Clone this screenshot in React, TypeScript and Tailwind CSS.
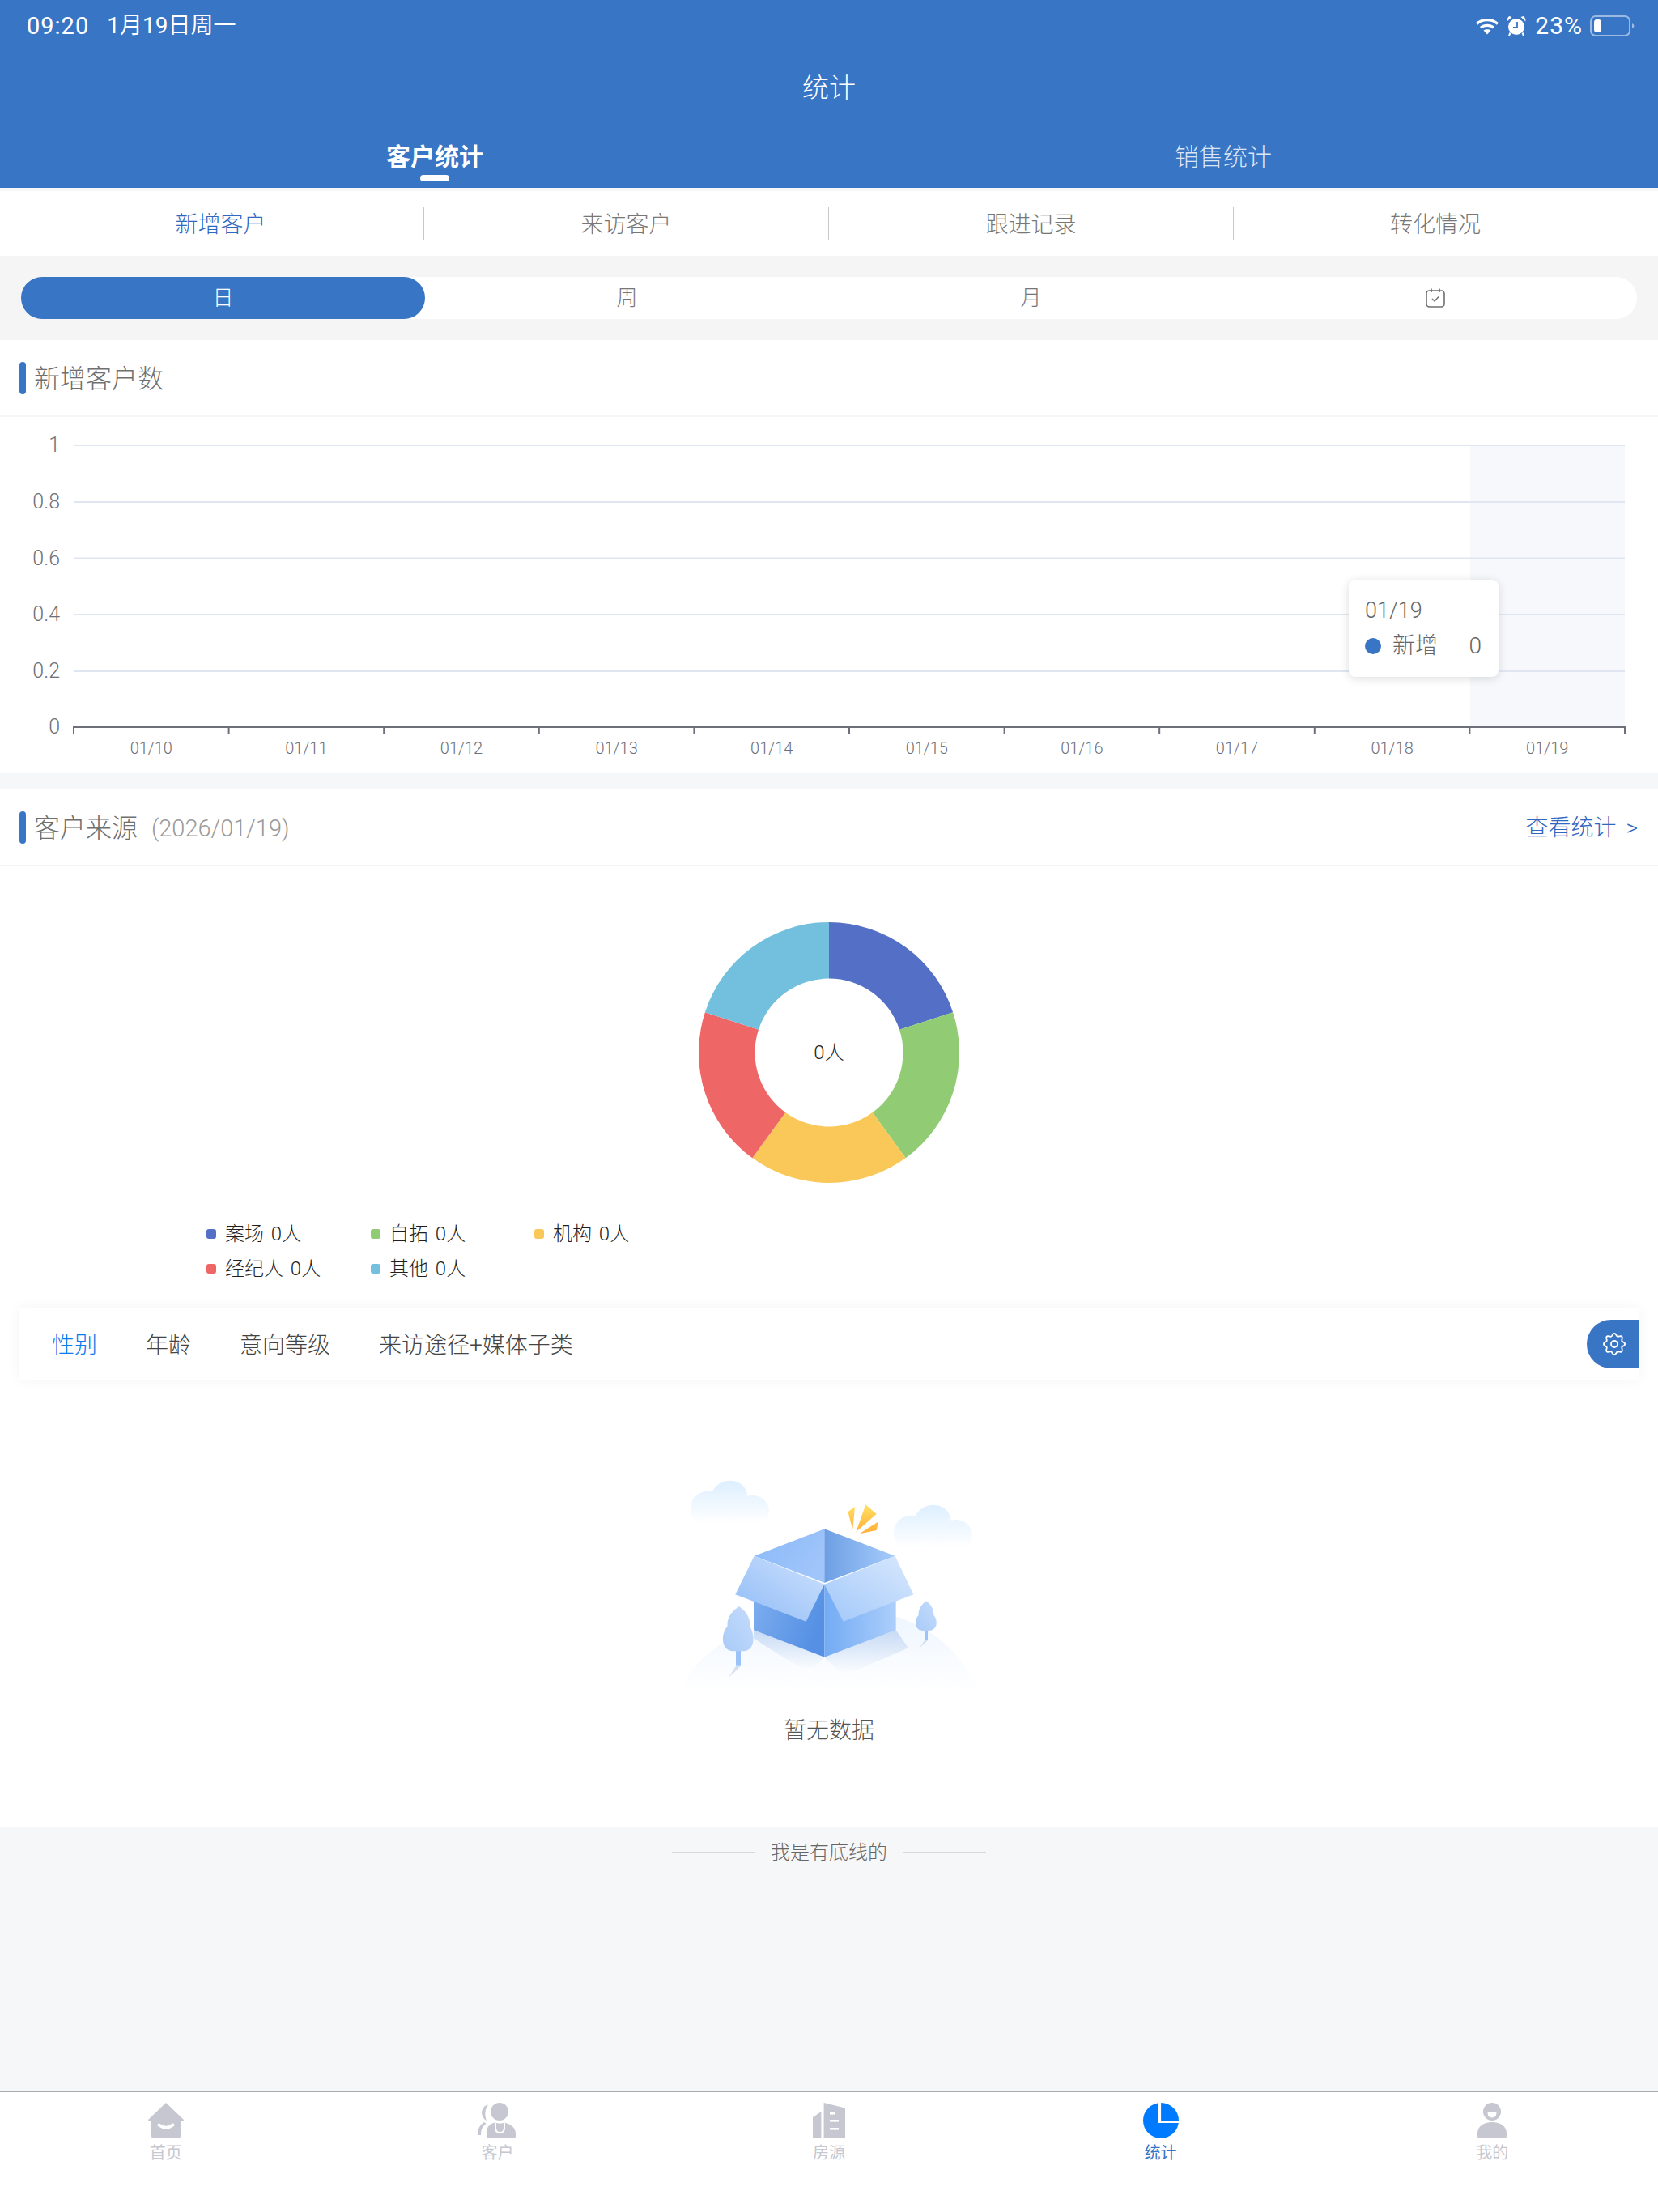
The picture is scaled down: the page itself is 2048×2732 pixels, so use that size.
import React from "react";

const F = "font-['Roboto','Noto_Sans_CJK_SC',sans-serif]";

function arc(cx: number, cy: number, R: number, r: number, a0: number, a1: number) {
  const p = (rad: number, a: number) => {
    const t = ((a - 90) * Math.PI) / 180;
    return `${(cx + rad * Math.cos(t)).toFixed(2)} ${(cy + rad * Math.sin(t)).toFixed(2)}`;
  };
  return `M${p(R, a0)} A${R} ${R} 0 0 1 ${p(R, a1)} L${p(r, a1)} A${r} ${r} 0 0 0 ${p(r, a0)} Z`;
}

function gearPath() {
  const pts: string[] = [];
  for (let i = 0; i < 144; i++) {
    const t = (i / 144) * Math.PI * 2;
    const r = 11.6 + 1.5 * Math.cos(8 * t);
    pts.push(`${(14 + r * Math.cos(t)).toFixed(2)},${(14 + r * Math.sin(t)).toFixed(2)}`);
  }
  return pts.join(" ");
}

function Wifi() {
  return (
    <svg width="30" height="22" viewBox="0 0 30 22" fill="none" stroke="white" strokeWidth="3.4">
      <path d="M2 8.5 C9 2 21 2 28 8.5" />
      <path d="M7 13.2 C11.5 9.4 18.5 9.4 23 13.2" />
      <path d="M15 21.5 L10.5 16.5 C13 14.8 17 14.8 19.5 16.5 Z" fill="white" stroke="none" />
    </svg>
  );
}

function Alarm() {
  return (
    <svg width="24" height="26" viewBox="0 0 24 25">
      <circle cx="12" cy="13.5" r="10" fill="white" />
      <path d="M.5 7 L6.5 1.5 L3.2 .6 Q.5 2.5 .5 7Z M23.5 7 L17.5 1.5 L20.8 .6 Q23.5 2.5 23.5 7Z" fill="white" />
      <path d="M4.5 21 L3 24.5 M19.5 21 L21 24.5" stroke="white" strokeWidth="2" />
      <path d="M13 7.5 V14.5 H8" stroke="#3875C5" strokeWidth="1.8" fill="none" />
    </svg>
  );
}

function Battery() {
  return (
    <svg width="55" height="26" viewBox="0 0 55 26">
      <rect x="1" y="1" width="48" height="24" rx="6" fill="none" stroke="white" strokeOpacity="0.5" strokeWidth="2" />
      <rect x="5" y="5" width="9" height="16" rx="3.5" fill="white" />
      <path d="M52 10 Q54.5 11 54.5 13 Q54.5 15 52 16Z" fill="white" fillOpacity="0.5" />
    </svg>
  );
}

function CalendarIcon() {
  return (
    <svg width="24" height="24" viewBox="0 0 24 24" fill="none" stroke="#6f6f6f" strokeWidth="1.6">
      <rect x="1" y="3" width="22" height="20" rx="3.5" />
      <path d="M7 0.5 V5 M17 0.5 V5" />
      <path d="M8 13 L11 16 L16 10.5" strokeWidth="1.4" />
    </svg>
  );
}

function HomeIcon() {
  return (
    <svg width="44" height="44" viewBox="0 0 44 44">
      <path d="M22 0 L43.4 20.6 Q45 23 42 23 H40 V41 Q40 44 37 44 H7 Q4 44 4 41 V23 H2 Q-1 23 .6 20.6 Z" fill="#C6C7D0" />
      <path d="M13.5 27.5 Q22 34 30.5 27.5" stroke="white" strokeWidth="4" strokeLinecap="round" fill="none" />
    </svg>
  );
}

function CustomerIcon() {
  return (
    <svg width="48" height="44" viewBox="0 0 48 44">
      <circle cx="27" cy="11" r="11" fill="#C6C7D0" />
      <path d="M11 41 V37 C11 30 15 26 21 24.5 C26 26 30 26 33 24.5 C39 26 47 30 47 38 V41 Q47 44 44 44 H14 Q11 44 11 41Z" fill="#C6C7D0" />
      <path d="M22 25 V31 Q22 37 27.5 37 Q33 37 33 31 V25" stroke="white" strokeWidth="2" fill="none" />
      <path d="M13 2.5 C4 4 2 17 11 22 C8.5 16 8.5 8 13 2.5Z" fill="#C6C7D0" />
      <path d="M8 24 C3 27 0 32 0 40 H4 C4 33 6 29 10.5 26 Z" fill="#C6C7D0" />
    </svg>
  );
}

function HouseIcon() {
  return (
    <svg width="44" height="44" viewBox="0 0 44 44">
      <path d="M2 18 L12.4 11 V44 H3 Q2 44 2 43Z" fill="#C6C7D0" />
      <path d="M15.6 0 L42 6.5 V43 Q42 44 41 44 H15.6Z" fill="#C6C7D0" />
      <rect x="23" y="12" width="6" height="2.6" fill="white" />
      <rect x="23" y="21" width="11" height="2.6" fill="white" />
      <rect x="23" y="31" width="11" height="2.6" fill="white" />
    </svg>
  );
}

function StatIcon() {
  return (
    <svg width="44" height="44" viewBox="0 0 44 44">
      <circle cx="22" cy="22" r="22" fill="#007AFF" />
      <path d="M20.5 0 V23.5 H44" stroke="white" strokeWidth="3.2" fill="none" />
    </svg>
  );
}

function MeIcon() {
  return (
    <svg width="44" height="44" viewBox="0 0 44 44">
      <circle cx="22" cy="11" r="11" fill="#C6C7D0" />
      <path d="M16.5 12 H27.5 Q27.5 18.5 22 18.5 Q16.5 18.5 16.5 12Z" fill="white" />
      <path d="M4 41 V38 C4 29 12 24 22 24 C32 24 40 29 40 38 V41 Q40 44 37 44 H7 Q4 44 4 41Z" fill="#C6C7D0" />
    </svg>
  );
}

function Chart() {
  const ys = [35, 105, 174.5, 244, 314];
  const yl = ["1", "0.8", "0.6", "0.4", "0.2"];
  const dates = ["01/10", "01/11", "01/12", "01/13", "01/14", "01/15", "01/16", "01/17", "01/18", "01/19"];
  const x0 = 91;
  const cw = 191.6;
  return (
    <svg width="2048" height="440" viewBox="0 0 2048 440" className="block">
      <rect x="1816" y="35" width="191" height="348" fill="#F6F8FC" />
      {ys.map((y) => (
        <line key={y} x1={x0} x2={2007} y1={y} y2={y} stroke="#E0E6F1" strokeWidth="2" />
      ))}
      {ys.map((y, i) => (
        <text key={y} x="74" y={y + 8} textAnchor="end" fontSize="25" fill="#6E7079" fontWeight="300">
          {yl[i]}
        </text>
      ))}
      <text x="74" y="391" textAnchor="end" fontSize="25" fill="#6E7079" fontWeight="300">
        0
      </text>
      <line x1={x0 - 1} x2={2008} y1="383" y2="383" stroke="#6E7079" strokeWidth="2" />
      {Array.from({ length: 11 }).map((_, i) => (
        <line key={i} x1={x0 + cw * i} x2={x0 + cw * i} y1="383" y2="392" stroke="#6E7079" strokeWidth="2" />
      ))}
      {dates.map((d, i) => (
        <text key={d} x={x0 + cw * (i + 0.5)} y="416" textAnchor="middle" fontSize="20" fill="#6E7079" fontWeight="300">
          {d}
        </text>
      ))}
    </svg>
  );
}

function Donut() {
  const colors = ["#5470C6", "#91CC75", "#FAC858", "#EE6666", "#73C0DE"];
  return (
    <svg width="322" height="322" viewBox="0 0 322 322" className="block mx-auto">
      {colors.map((c, i) => (
        <path key={c} d={arc(161, 161, 161, 91.5, i * 72, (i + 1) * 72)} fill={c} />
      ))}
      <text x="161" y="169" textAnchor="middle" fontSize="24" fill="#222222" fontWeight="300">
        0人
      </text>
    </svg>
  );
}

function Illustration() {
  const cloud = "M280 322 C272 275 310 238 360 246 C376 212 422 196 458 214 C480 226 488 244 491 263 C532 252 572 282 570 322 C568 345 555 360 540 366 H310 C295 360 282 345 280 322Z";
  return (
    <svg width="500" height="340" viewBox="0 0 1500 1020" className="block ml-[760px]">
      <defs>
        <linearGradient id="cl" x1="0" y1="0" x2="0" y2="1">
          <stop offset="0" stopColor="#DDEFFF" />
          <stop offset="1" stopColor="#FFFFFF" />
        </linearGradient>
        <linearGradient id="hill" x1="0" y1="0" x2="0" y2="1">
          <stop offset="0" stopColor="#EFF6FF" />
          <stop offset="1" stopColor="#FFFFFF" />
        </linearGradient>
        <linearGradient id="star" x1="0" y1="0" x2="0" y2="1">
          <stop offset="0" stopColor="#FFE066" />
          <stop offset="1" stopColor="#FFAE35" />
        </linearGradient>
        <linearGradient id="bl" x1="0" y1="0" x2="1" y2="0.6">
          <stop offset="0" stopColor="#8AB9F8" />
          <stop offset="1" stopColor="#A0C5FA" />
        </linearGradient>
        <linearGradient id="br" x1="0" y1="0.5" x2="1" y2="0.5">
          <stop offset="0" stopColor="#6E9FE4" />
          <stop offset="1" stopColor="#A6CCFC" />
        </linearGradient>
        <linearGradient id="fl" x1="0" y1="0" x2="1" y2="0.4">
          <stop offset="0" stopColor="#7FAFEF" />
          <stop offset="1" stopColor="#5590E4" />
        </linearGradient>
        <linearGradient id="fr" x1="0" y1="0" x2="1" y2="0">
          <stop offset="0" stopColor="#73ABF4" />
          <stop offset="1" stopColor="#ACCEFB" />
        </linearGradient>
        <linearGradient id="flapl" x1="0" y1="1" x2="1" y2="0">
          <stop offset="0" stopColor="#8FBBF7" />
          <stop offset="1" stopColor="#CFE2FD" />
        </linearGradient>
        <linearGradient id="flapr" x1="0" y1="1" x2="1" y2="0">
          <stop offset="0" stopColor="#A2C8FA" />
          <stop offset="1" stopColor="#D8E8FD" />
        </linearGradient>
        <linearGradient id="sh" x1="0" y1="0" x2="0" y2="1">
          <stop offset="0" stopColor="#C6DAF5" />
          <stop offset="1" stopColor="#FFFFFF" />
        </linearGradient>
        <linearGradient id="tree" x1="0" y1="1" x2="1" y2="0">
          <stop offset="0" stopColor="#A9CBF8" />
          <stop offset="1" stopColor="#C4DCFB" />
        </linearGradient>
      </defs>
      <path d="M235 985 C300 860 400 790 515 760 L775 860 L1040 710 C1160 745 1280 830 1345 985Z" fill="url(#hill)" />
      <path d={cloud} fill="url(#cl)" />
      <path d={cloud} fill="url(#cl)" transform="translate(753 90)" />
      <path d="M862 322 L888 303 L880 388Z M928 295 L968 330 L892 396Z M975 358 L968 390 L905 403Z" fill="url(#star)" />
      <path d="M513 760 L775 860 L720 916 Q600 850 513 790Z" fill="url(#sh)" />
      <path d="M1040 760 L1086 826 L845 930 L775 860Z" fill="url(#sh)" />
      <path d="M515 485 L775 385 V585Z" fill="url(#bl)" />
      <path d="M775 385 L1037 485 L775 585Z" fill="url(#br)" />
      <path d="M513 640 L775 590 V860 L513 760Z" fill="url(#fl)" />
      <path d="M775 590 L1040 640 V760 L775 860Z" fill="url(#fr)" />
      <path d="M515 485 L775 590 L707 728 L445 628Z" fill="url(#flapl)" />
      <path d="M1037 485 L1105 628 L845 728 L775 590Z" fill="url(#flapr)" />
      <path d="M447 893 L420 935 L465 893Z" fill="#D5E0EE" />
      <rect x="447" y="830" width="18" height="63" fill="#9CC3F7" />
      <path d="M458 672 C485 690 502 715 498 745 C515 770 525 838 470 838 H440 C390 838 390 775 416 745 C412 715 432 690 458 672Z" fill="url(#tree)" />
      <path d="M1146 798 L1128 826 L1158 798Z" fill="#D5E0EE" />
      <rect x="1146" y="755" width="12" height="43" fill="#9CC3F7" />
      <path d="M1152 652 C1170 665 1182 685 1180 705 C1195 720 1198 762 1160 762 H1142 C1106 762 1108 720 1124 705 C1122 685 1134 665 1152 652Z" fill="url(#tree)" />
    </svg>
  );
}

function Legend({ color, text }: { color: string; text: string }) {
  return (
    <div className="flex items-center h-[43px]">
      <span className={`w-[12px] h-[12px] rounded-[3px] ${color}`} />
      <span className="ml-[11px] text-[24px] text-[#1f1f1f] leading-none whitespace-pre [word-spacing:3px]">{text}</span>
    </div>
  );
}

function SectionTitle({ children }: { children: React.ReactNode }) {
  return (
    <div className="flex items-center">
      <span className="w-[8px] h-[40px] rounded-[4px] bg-[#3875C5]" />
      <span className="ml-[10px] mt-[3px] text-[32px] text-[#707070] leading-none">{children}</span>
    </div>
  );
}

function NavItem({ icon, label, active }: { icon: React.ReactNode; label: string; active?: boolean }) {
  return (
    <div className="flex flex-col items-center">
      <div className="h-[44px] flex items-center justify-center">{icon}</div>
      <span className={`mt-[6px] text-[20px] font-normal leading-[24px] ${active ? "text-[#3875C5]" : "text-[#C6C7D0]"}`}>{label}</span>
    </div>
  );
}

export default function App() {
  return (
    <div className={`w-[2048px] h-[2732px] flex flex-col bg-[#F6F7F9] ${F} font-light`}>
      <header className="h-[232px] bg-[#3875C5] text-white flex flex-col shrink-0">
        <div className="h-[64px] flex items-center justify-between pl-[33px] pr-[29px]">
          <div className="flex items-center font-normal leading-none">
            <span className="text-[29px] tracking-[1px]">09:20</span>
            <span className="ml-[22px] text-[28px]">1月19日周一</span>
          </div>
          <div className="flex items-center">
            <Wifi />
            <span className="ml-[9px]"><Alarm /></span>
            <span className="ml-[11px] text-[30px] tracking-[1px] leading-none font-normal">23%</span>
            <span className="ml-[9px]"><Battery /></span>
          </div>
        </div>
        <div className="h-[88px] flex items-center justify-center text-[33px] leading-none">统计</div>
        <div className="flex-1 grid grid-cols-2 px-[50px]">
          <div className="flex flex-col items-center pt-[20px]">
            <span className="text-[30px] leading-[44px] font-bold">客户统计</span>
            <span className="w-[36px] h-[8px] rounded-full bg-white" />
          </div>
          <div className="flex flex-col items-center pt-[20px]">
            <span className="text-[30px] leading-[44px] text-[#dbe6f5]">销售统计</span>
          </div>
        </div>
      </header>

      <div className="h-[4px] shrink-0" />

      <nav className="h-[80px] bg-white grid grid-cols-[498px_500px_500px_498px] items-center px-[26px] shrink-0 text-[28px] text-[#777777]">
        <div className="h-[40px] flex items-center justify-center border-r border-[#C9C9C9] text-[#3067C0] pt-[3px] pr-[4px]">新增客户</div>
        <div className="h-[40px] flex items-center justify-center border-r border-[#C9C9C9] pt-[3px]">来访客户</div>
        <div className="h-[40px] flex items-center justify-center border-r border-[#C9C9C9] pt-[3px]">跟进记录</div>
        <div className="h-[40px] flex items-center justify-center pt-[3px]">转化情况</div>
      </nav>

      <div className="h-[104px] bg-[#F5F5F5] px-[26px] py-[26px] shrink-0">
        <div className="h-[52px] bg-white rounded-full grid grid-cols-4 text-[26px] text-[#777777]">
          <div className="rounded-full bg-[#3875C5] text-white flex items-center justify-center">日</div>
          <div className="flex items-center justify-center">周</div>
          <div className="flex items-center justify-center">月</div>
          <div className="flex items-center justify-center"><CalendarIcon /></div>
        </div>
      </div>

      <section className="bg-white shrink-0">
        <div className="h-[95px] pl-[24px] flex items-center border-b-2 border-[#F5F5F7]">
          <SectionTitle>新增客户数</SectionTitle>
        </div>
        <div className="relative h-[440px]">
          <Chart />
          <div className="absolute left-[1666px] top-[201px] w-[185px] h-[120px] bg-white rounded-[8px] shadow-[0_2px_12px_rgba(0,0,0,0.14)] pl-[20px] pr-[21px] pt-[18px] text-[#666666] text-[28px]">
            <div className="leading-[40px] text-[27px]">01/19</div>
            <div className="flex items-center leading-[44px] mt-[2px]">
              <span className="w-[20px] h-[20px] rounded-full bg-[#3875C5]" />
              <span className="ml-[14px]">新增</span>
              <span className="ml-auto">0</span>
            </div>
          </div>
        </div>
      </section>

      <div className="h-[20px] shrink-0" />

      <section className="bg-white shrink-0">
        <div className="h-[95px] pl-[24px] pr-[25px] flex items-center justify-between border-b-2 border-[#F5F5F7]">
          <div className="flex items-center">
            <SectionTitle>客户来源</SectionTitle>
            <span className="ml-[17px] mt-[3px] text-[29px] leading-none text-[#9a9a9a]">(2026/01/19)</span>
          </div>
          <span className="mt-[3px] text-[28px] leading-none text-[#3067C0]">查看统计<span className="ml-[12px]">&gt;</span></span>
        </div>

        <div className="pt-[69px]">
          <Donut />
        </div>

        <div className="mt-[41px] pl-[255px] grid grid-cols-[203px_202px_202px]">
          <Legend color="bg-[#5470C6]" text="案场 0人" />
          <Legend color="bg-[#91CC75]" text="自拓 0人" />
          <Legend color="bg-[#FAC858]" text="机构 0人" />
          <Legend color="bg-[#EE6666]" text="经纪人 0人" />
          <Legend color="bg-[#73C0DE]" text="其他 0人" />
        </div>

        <div className="mt-[28px] mx-[24px] h-[88px] bg-white shadow-[0_0_18px_rgba(0,0,0,0.05)] flex items-center justify-between pl-[40px]">
          <div className="flex items-center gap-[60px] pt-[3px] text-[28px] text-[#444444] leading-none">
            <span className="text-[#0D7BEE]">性别</span>
            <span>年龄</span>
            <span>意向等级</span>
            <span>来访途径+媒体子类</span>
          </div>
          <div className="w-[64px] h-[60px] rounded-l-full bg-[#3875C5] flex items-center justify-center pl-[4px]">
            <svg width="28" height="28" viewBox="0 0 28 28" fill="none" stroke="white" strokeWidth="1.8">
              <polygon points={gearPath()} />
              <circle cx="14" cy="14" r="4" />
            </svg>
          </div>
        </div>

        <div className="mt-[56px]">
          <Illustration />
        </div>
        <div className="mt-[20px] pb-[101px] text-center text-[28px] leading-[36px] text-[#555555]">暂无数据</div>
      </section>

      <div className="flex-1 min-h-0">
        <div className="h-[62px] flex items-center justify-center text-[24px] text-[#666666]">
          <span className="w-[102px] h-[2px] bg-[#D8D8D8]" />
          <span className="mx-[20px]">我是有底线的</span>
          <span className="w-[102px] h-[2px] bg-[#D8D8D8]" />
        </div>
      </div>

      <footer className="h-[150px] bg-white border-t-2 border-[#AAAAAA] grid grid-cols-5 pt-[13px] shrink-0">
        <NavItem icon={<HomeIcon />} label="首页" />
        <NavItem icon={<CustomerIcon />} label="客户" />
        <NavItem icon={<HouseIcon />} label="房源" />
        <NavItem icon={<StatIcon />} label="统计" active />
        <NavItem icon={<MeIcon />} label="我的" />
      </footer>
    </div>
  );
}
